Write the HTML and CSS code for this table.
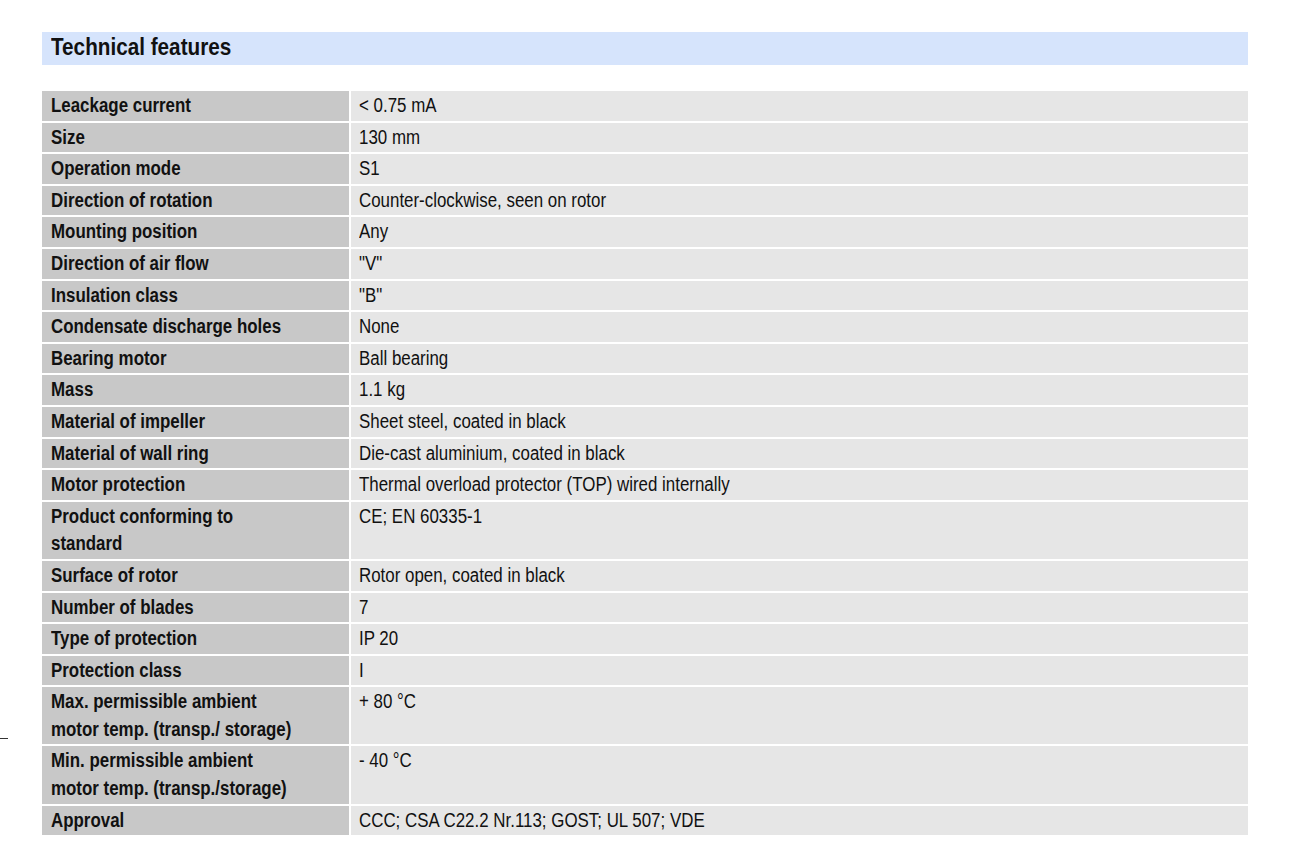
FILE: index.html
```html
<!DOCTYPE html>
<html>
<head>
<meta charset="utf-8">
<link rel="stylesheet" href="styles.css">
</head>
<body>
<div class="page">
  <h2 class="section-title"><span class="t">Technical features</span></h2>
  <div class="spec-table">
    <div class="lbl"><span class="t">Leackage current</span></div><div class="val"><span class="t">&lt; 0.75 mA</span></div>
    <div class="lbl"><span class="t">Size</span></div><div class="val"><span class="t">130 mm</span></div>
    <div class="lbl"><span class="t">Operation mode</span></div><div class="val"><span class="t">S1</span></div>
    <div class="lbl"><span class="t">Direction of rotation</span></div><div class="val"><span class="t">Counter-clockwise, seen on rotor</span></div>
    <div class="lbl"><span class="t">Mounting position</span></div><div class="val"><span class="t">Any</span></div>
    <div class="lbl"><span class="t">Direction of air flow</span></div><div class="val"><span class="t">"V"</span></div>
    <div class="lbl"><span class="t">Insulation class</span></div><div class="val"><span class="t">"B"</span></div>
    <div class="lbl"><span class="t">Condensate discharge holes</span></div><div class="val"><span class="t">None</span></div>
    <div class="lbl"><span class="t">Bearing motor</span></div><div class="val"><span class="t">Ball bearing</span></div>
    <div class="lbl"><span class="t">Mass</span></div><div class="val"><span class="t">1.1 kg</span></div>
    <div class="lbl"><span class="t">Material of impeller</span></div><div class="val"><span class="t">Sheet steel, coated in black</span></div>
    <div class="lbl"><span class="t">Material of wall ring</span></div><div class="val"><span class="t">Die-cast aluminium, coated in black</span></div>
    <div class="lbl"><span class="t">Motor protection</span></div><div class="val"><span class="t">Thermal overload protector (TOP) wired internally</span></div>
    <div class="lbl"><span class="t">Product conforming to<br>standard</span></div><div class="val"><span class="t">CE; EN 60335-1</span></div>
    <div class="lbl"><span class="t">Surface of rotor</span></div><div class="val"><span class="t">Rotor open, coated in black</span></div>
    <div class="lbl"><span class="t">Number of blades</span></div><div class="val"><span class="t">7</span></div>
    <div class="lbl"><span class="t">Type of protection</span></div><div class="val"><span class="t">IP 20</span></div>
    <div class="lbl"><span class="t">Protection class</span></div><div class="val"><span class="t">I</span></div>
    <div class="lbl"><span class="t">Max. permissible ambient<br>motor temp. (transp./ storage)</span></div><div class="val"><span class="t">+ 80 °C</span></div>
    <div class="lbl"><span class="t">Min. permissible ambient<br>motor temp. (transp./storage)</span></div><div class="val"><span class="t">- 40 °C</span></div>
    <div class="lbl"><span class="t">Approval</span></div><div class="val"><span class="t">CCC; CSA C22.2 Nr.113; GOST; UL 507; VDE</span></div>
  </div>
</div>
<div class="edge-mark"></div>
</body>
</html>
```
FILE: styles.css
```css
html, body {
  margin: 0;
  padding: 0;
  background: #ffffff;
}
body {
  font-family: "Liberation Sans", Arial, sans-serif;
  color: #111111;
  position: relative;
  width: 1292px;
  height: 858px;
}
.page {
  padding: 32px 0 0 42px;
  width: 1206px;
}
.t {
  display: inline-block;
  white-space: nowrap;
  transform: scaleX(0.845);
  transform-origin: 0 0;
}
.section-title {
  margin: 0;
  height: 33px;
  line-height: 30px;
  background: #d6e4fc;
  font-size: 24.5px;
  font-weight: bold;
  padding-left: 9px;
  overflow: hidden;
}
.spec-table {
  margin-top: 26px;
  display: grid;
  grid-template-columns: 307px 897px;
  gap: 2px;
  font-size: 20px;
  line-height: 27.6px;
}
.lbl, .val {
  padding: 1px 0 1px 9px;
}
.lbl {
  background: #c8c8c8;
  font-weight: bold;
}
.val {
  background: #e6e6e6;
  padding-left: 8px;
}
.edge-mark {
  position: absolute;
  left: 0;
  top: 738px;
  width: 8px;
  height: 1px;
  background: #333;
}
```
